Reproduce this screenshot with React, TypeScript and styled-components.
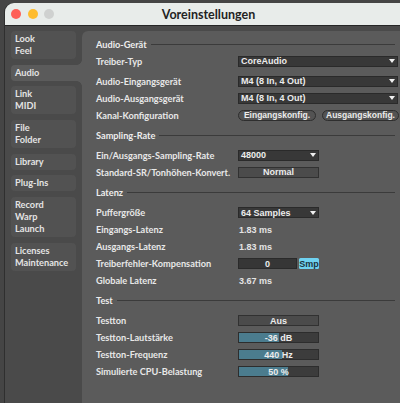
import React from 'react';
import styled, { createGlobalStyle } from 'styled-components';

const GlobalStyle = createGlobalStyle`
  html, body {
    margin: 0;
    padding: 0;
    background: #454545;
    overflow: hidden;
  }
  body {
    font-family: Lato, "Noto Sans", sans-serif;
  }
`;

const PANEL = '#5b5b5b';
const SIDEBAR = '#4a4a4a';

const Window = styled.div`
  margin: 3px 0 0 5px;
  width: 407px;
  height: 400px;
  border-radius: 9px 9px 0 0;
  overflow: hidden;
  background: ${SIDEBAR};
  box-shadow: -1px 0 0 #2f2f2f;
  display: flex;
  flex-direction: column;
`;

const TitleBar = styled.div`
  flex: none;
  height: 22px;
  background: #e8ecea;
  border-bottom: 1px solid #262626;
  display: grid;
  grid-template-columns: 1fr auto 1fr;
  align-items: center;
`;

const Lights = styled.div`
  display: flex;
  gap: 6.7px;
  padding-left: 6px;
`;

const Light = styled.span<{ $color: string }>`
  width: 10px;
  height: 10px;
  border-radius: 50%;
  background: ${({ $color }) => $color};
`;

const Title = styled.div`
  font-size: 12.5px;
  font-weight: 700;
  color: #232323;
`;

const Body = styled.div`
  flex: 1;
  display: flex;
  padding-top: 5px;
`;

const Sidebar = styled.nav`
  flex: none;
  width: 77px;
  padding-left: 6px;
  box-sizing: border-box;
  display: flex;
  flex-direction: column;
  gap: 5.7px;
`;

const NavItem = styled.div<{ $active?: boolean }>`
  position: relative;
  width: ${({ $active }) => ($active ? '71px' : '65px')};
  box-sizing: border-box;
  padding: 2px 4px;
  border-radius: ${({ $active }) => ($active ? '4px 0 0 4px' : '4px')};
  background: ${({ $active }) => ($active ? PANEL : '#525252')};
  font-size: 9.2px;
  font-weight: 700;
  line-height: 12px;
  color: #e4e4e4;

  ${({ $active }) =>
    $active &&
    `
    &::before, &::after {
      content: '';
      position: absolute;
      right: 0;
      width: 5px;
      height: 5px;
    }
    &::before {
      top: -5px;
      background: radial-gradient(circle at 0 0, transparent 4.5px, ${PANEL} 5px);
    }
    &::after {
      bottom: -5px;
      background: radial-gradient(circle at 0 100%, transparent 4.5px, ${PANEL} 5px);
    }
  `}
`;

const Panel = styled.main`
  flex: 1;
  background: ${PANEL};
  border-radius: 6px 0 0 0;
  padding: 4.5px 0 0 14px;
  display: flex;
  flex-direction: column;
`;

const Section = styled.section`
  display: flex;
  flex-direction: column;

  & + & {
    margin-top: 3.3px;
  }
`;

const SectionHead = styled.div<{ $gap: number }>`
  height: 17px;
  display: flex;
  align-items: center;
  margin-bottom: ${({ $gap }) => $gap}px;
  font-size: 9.2px;
  font-weight: 700;
  color: #ededed;

  &::after {
    content: '';
    flex: 1;
    height: 1px;
    background: #3b3b3b;
    margin: 0 17px 0 4px;
  }
`;

const Row = styled.div<{ $after?: number }>`
  height: 17px;
  display: grid;
  grid-template-columns: 142px auto;
  align-items: center;
  margin-bottom: ${({ $after }) => $after || 0}px;
`;

const Label = styled.span`
  font-size: 9.2px;
  font-weight: 700;
  color: #e8e8e8;
  white-space: nowrap;
`;

const valueFont = `
  font-family: "Liberation Sans", Arial, sans-serif;
  font-size: 9px;
  font-weight: 700;
  color: #ececec;
`;

const Select = styled.div<{ $wide?: boolean }>`
  width: ${({ $wide }) => ($wide ? 160 : 81)}px;
  height: 11px;
  box-sizing: border-box;
  background: #383838;
  border: 1px solid #2a2a2a;
  display: flex;
  align-items: center;
  justify-content: space-between;
  padding: 0 2px 0 2px;
  ${valueFont}
`;

const Arrow = () => (
  <svg width="6" height="4" viewBox="0 0 6 4">
    <polygon points="0,0 6,0 3,4" fill="#f0f0f0" />
  </svg>
);

const Toggle = styled.div`
  width: 81px;
  height: 11px;
  box-sizing: border-box;
  background: #4b4b4b;
  border: 1px solid #313131;
  display: flex;
  align-items: center;
  justify-content: center;
  ${valueFont}
`;

const Pills = styled.div`
  display: flex;
  gap: 6px;
`;

const Pill = styled.div<{ $w: number }>`
  width: ${({ $w }) => $w}px;
  height: 11px;
  box-sizing: border-box;
  border-radius: 6px;
  background: #535353;
  border: 1px solid #2e2e2e;
  display: flex;
  align-items: center;
  justify-content: center;
  ${valueFont}
  font-size: 8.5px;
`;

const Plain = styled.span`
  padding-left: 1px;
  ${valueFont}
  color: #e4e4e4;
`;

const NumberGroup = styled.div`
  display: flex;
  gap: 2px;
`;

const NumberBox = styled.div`
  width: 59px;
  height: 11px;
  box-sizing: border-box;
  background: #363636;
  border: 1px solid #2a2a2a;
  display: flex;
  align-items: center;
  justify-content: center;
  ${valueFont}
`;

const Unit = styled.div`
  width: 20px;
  height: 11px;
  border-radius: 1.5px;
  background: #6fd2f1;
  display: flex;
  align-items: center;
  justify-content: center;
  ${valueFont}
  color: #1c3441;
`;

const Slider = styled.div`
  position: relative;
  width: 81px;
  height: 11px;
  box-sizing: border-box;
  background: #3c3c3c;
  border: 1px solid #2d2d2d;
  display: flex;
  align-items: center;
  justify-content: center;
  overflow: hidden;
  ${valueFont}
`;

const SliderFill = styled.div`
  position: absolute;
  left: 0;
  top: 0;
  bottom: 0;
  background: #4b7c8e;
`;

const SliderText = styled.span`
  position: relative;
`;

const Meter = ({ value, text }: { value: number; text: string }) => (
  <Slider>
    <SliderFill style={{ width: `${value}%` }} />
    <SliderText>{text}</SliderText>
  </Slider>
);

const navItems: { lines: string[]; active?: boolean }[] = [
  { lines: ['Look', 'Feel'] },
  { lines: ['Audio'], active: true },
  { lines: ['Link', 'MIDI'] },
  { lines: ['File', 'Folder'] },
  { lines: ['Library'] },
  { lines: ['Plug-Ins'] },
  { lines: ['Record', 'Warp', 'Launch'] },
  { lines: ['Licenses', 'Maintenance'] },
];

export default function App() {
  return (
    <>
      <GlobalStyle />
      <Window>
        <TitleBar>
          <Lights>
            <Light $color="#fe5f57" />
            <Light $color="#febc2e" />
            <Light $color="#cfd1d0" />
          </Lights>
          <Title>Voreinstellungen</Title>
          <div />
        </TitleBar>
        <Body>
          <Sidebar>
            {navItems.map((item) => (
              <NavItem key={item.lines[0]} $active={item.active}>
                {item.lines.map((l) => (
                  <div key={l}>{l}</div>
                ))}
              </NavItem>
            ))}
          </Sidebar>
          <Panel>
            <Section>
              <SectionHead $gap={0}>Audio-Gerät</SectionHead>
              <Row $after={3}>
                <Label>Treiber-Typ</Label>
                <Select $wide>
                  CoreAudio <Arrow />
                </Select>
              </Row>
              <Row>
                <Label>Audio-Eingangsgerät</Label>
                <Select $wide>
                  M4 (8 In, 4 Out) <Arrow />
                </Select>
              </Row>
              <Row>
                <Label>Audio-Ausgangsgerät</Label>
                <Select $wide>
                  M4 (8 In, 4 Out) <Arrow />
                </Select>
              </Row>
              <Row>
                <Label>Kanal-Konfiguration</Label>
                <Pills>
                  <Pill $w={78}>Eingangskonfig.</Pill>
                  <Pill $w={77}>Ausgangskonfig.</Pill>
                </Pills>
              </Row>
            </Section>

            <Section>
              <SectionHead $gap={3}>Sampling-Rate</SectionHead>
              <Row>
                <Label>Ein/Ausgangs-Sampling-Rate</Label>
                <Select>
                  48000 <Arrow />
                </Select>
              </Row>
              <Row>
                <Label>Standard-SR/Tonhöhen-Konvert.</Label>
                <Toggle>Normal</Toggle>
              </Row>
            </Section>

            <Section>
              <SectionHead $gap={3}>Latenz</SectionHead>
              <Row>
                <Label>Puffergröße</Label>
                <Select>
                  64 Samples <Arrow />
                </Select>
              </Row>
              <Row>
                <Label>Eingangs-Latenz</Label>
                <Plain>1.83 ms</Plain>
              </Row>
              <Row>
                <Label>Ausgangs-Latenz</Label>
                <Plain>1.83 ms</Plain>
              </Row>
              <Row>
                <Label>Treiberfehler-Kompensation</Label>
                <NumberGroup>
                  <NumberBox>0</NumberBox>
                  <Unit>Smp</Unit>
                </NumberGroup>
              </Row>
              <Row>
                <Label>Globale Latenz</Label>
                <Plain>3.67 ms</Plain>
              </Row>
            </Section>

            <Section>
              <SectionHead $gap={3}>Test</SectionHead>
              <Row>
                <Label>Testton</Label>
                <Toggle>Aus</Toggle>
              </Row>
              <Row>
                <Label>Testton-Lautstärke</Label>
                <Meter value={50} text="-36 dB" />
              </Row>
              <Row>
                <Label>Testton-Frequenz</Label>
                <Meter value={55} text="440 Hz" />
              </Row>
              <Row>
                <Label>Simulierte CPU-Belastung</Label>
                <Meter value={62} text="50 %" />
              </Row>
            </Section>
          </Panel>
        </Body>
      </Window>
    </>
  );
}
